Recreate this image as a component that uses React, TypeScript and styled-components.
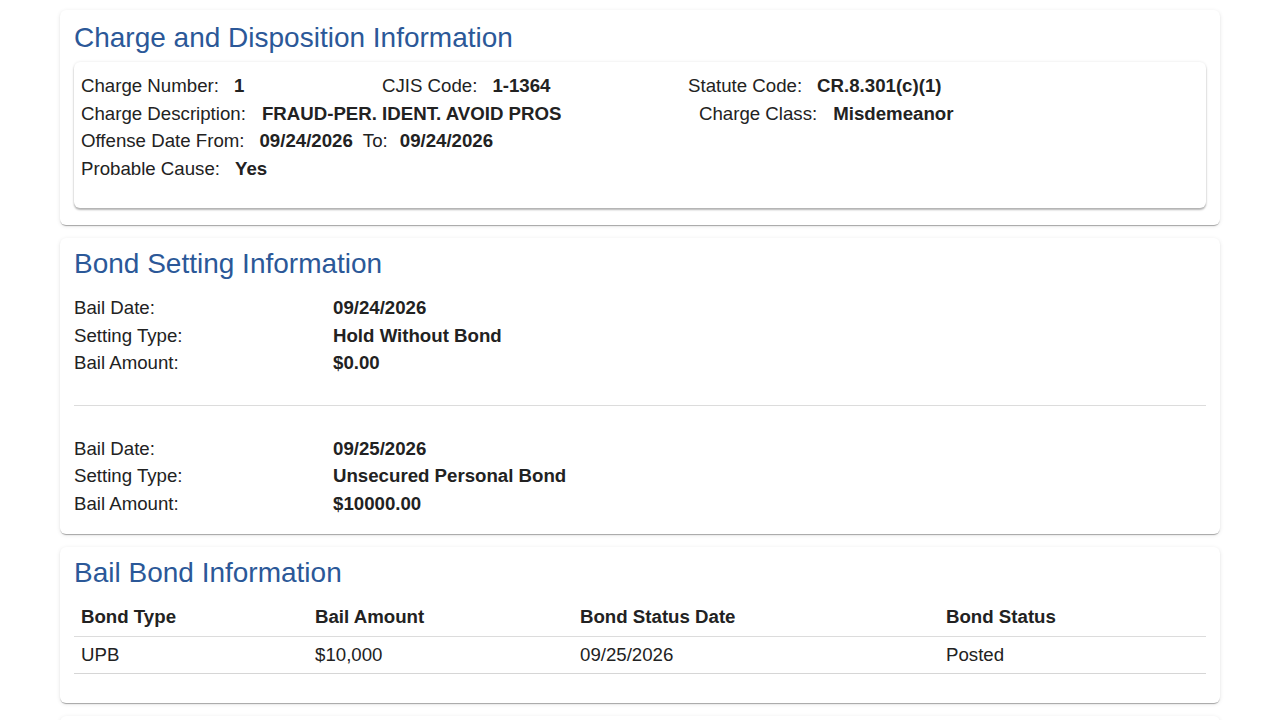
import React from "react";
import styled, { createGlobalStyle } from "styled-components";

const Global = createGlobalStyle`
  html, body { margin: 0; padding: 0; background: #ffffff; }
  body {
    font-family: "Liberation Sans", Arial, Helvetica, sans-serif;
    color: #222222;
    -webkit-font-smoothing: antialiased;
  }
  * { box-sizing: border-box; }
`;

const Page = styled.main`
  display: flex;
  flex-direction: column;
  gap: 13px;
  padding: 10px 60px 40px;
`;

const Card = styled.section<{ $top?: number }>`
  background: #fff;
  border-radius: 6px;
  padding: ${(p) => p.$top ?? 10}px 14px 17px;
  box-shadow: 0 2px 1px -1px rgba(0, 0, 0, 0.22), 0 1px 1px 0 rgba(0, 0, 0, 0.12),
    0 1px 4px 0 rgba(0, 0, 0, 0.1);
`;

const Title = styled.h2`
  margin: 0;
  font-size: 28px;
  line-height: 32px;
  font-weight: 400;
  color: #2b5898;
`;

const InnerCard = styled.div`
  margin-top: 8px;
  border-radius: 6px;
  padding: 10px 7px 26px;
  background: #fff;
  box-shadow: 0 2px 2px 0 rgba(0, 0, 0, 0.28), 0 0 3px 0 rgba(0, 0, 0, 0.1);
`;

const ChargeGrid = styled.div`
  display: grid;
  grid-template-columns: 301px 306px 1fr;
  font-size: 18.67px;
  line-height: 27.5px;
`;

const Field = styled.div<{ $span?: number; $shift?: number }>`
  display: flex;
  align-items: baseline;
  white-space: nowrap;
  grid-column: span ${(p) => p.$span ?? 1};
  padding-left: ${(p) => p.$shift ?? 0}px;
`;

const Label = styled.span`
  font-weight: 400;
`;

const Value = styled.b<{ $gap?: number }>`
  font-weight: 700;
  margin-left: ${(p) => p.$gap ?? 15}px;
  margin-right: 10px;
`;

const BondGroup = styled.div`
  display: grid;
  grid-template-columns: 259px 1fr;
  font-size: 18.67px;
  line-height: 27.5px;
  margin-top: 14px;
`;

const BondLabel = styled.span``;
const BondValue = styled.b`
  font-weight: 700;
`;

const Divider = styled.hr`
  border: none;
  border-top: 1px solid #dcdcdc;
  margin: 28px 0 29px;
`;

const Table = styled.table`
  margin-top: 10px;
  width: 100%;
  border-collapse: collapse;
  table-layout: fixed;
  font-size: 18.67px;
  margin-bottom: 12px;
`;

const Th = styled.th<{ $w?: number }>`
  text-align: left;
  font-weight: 700;
  padding: 0 7px;
  height: 37px;
  border-bottom: 1px solid #dcdcdc;
  width: ${(p) => (p.$w ? `${p.$w}px` : "auto")};
`;

const Td = styled.td`
  padding: 0 7px;
  height: 37px;
  border-bottom: 1px solid #d6d6d6;
  font-weight: 400;
`;

const NextCard = styled(Card)`
  min-height: 120px;
`;

const bonds = [
  { date: "09/24/2026", type: "Hold Without Bond", amount: "$0.00" },
  { date: "09/25/2026", type: "Unsecured Personal Bond", amount: "$10000.00" },
];

export default function App() {
  return (
    <>
      <Global />
      <Page>
        <Card $top={12}>
          <Title>Charge and Disposition Information</Title>
          <InnerCard>
            <ChargeGrid>
              <Field>
                <Label>Charge Number:</Label>
                <Value>1</Value>
              </Field>
              <Field>
                <Label>CJIS Code:</Label>
                <Value>1-1364</Value>
              </Field>
              <Field>
                <Label>Statute Code:</Label>
                <Value>CR.8.301(c)(1)</Value>
              </Field>
              <Field $span={2}>
                <Label>Charge Description:</Label>
                <Value $gap={16}>FRAUD-PER. IDENT. AVOID PROS</Value>
              </Field>
              <Field $shift={11}>
                <Label>Charge Class:</Label>
                <Value $gap={16}>Misdemeanor</Value>
              </Field>
              <Field $span={3}>
                <Label>Offense Date From:</Label>
                <Value>09/24/2026</Value>
                <Label>To:</Label>
                <Value $gap={12}>09/24/2026</Value>
              </Field>
              <Field $span={3}>
                <Label>Probable Cause:</Label>
                <Value>Yes</Value>
              </Field>
            </ChargeGrid>
          </InnerCard>
        </Card>

        <Card>
          <Title>Bond Setting Information</Title>
          {bonds.map((b, i) => (
            <React.Fragment key={b.date}>
              {i > 0 && <Divider />}
              <BondGroup>
                <BondLabel>Bail Date:</BondLabel>
                <BondValue>{b.date}</BondValue>
                <BondLabel>Setting Type:</BondLabel>
                <BondValue>{b.type}</BondValue>
                <BondLabel>Bail Amount:</BondLabel>
                <BondValue>{b.amount}</BondValue>
              </BondGroup>
            </React.Fragment>
          ))}
        </Card>

        <Card>
          <Title>Bail Bond Information</Title>
          <Table>
            <thead>
              <tr>
                <Th $w={234}>Bond Type</Th>
                <Th $w={265}>Bail Amount</Th>
                <Th $w={366}>Bond Status Date</Th>
                <Th>Bond Status</Th>
              </tr>
            </thead>
            <tbody>
              <tr>
                <Td>UPB</Td>
                <Td>$10,000</Td>
                <Td>09/25/2026</Td>
                <Td>Posted</Td>
              </tr>
            </tbody>
          </Table>
        </Card>

        <NextCard />
      </Page>
    </>
  );
}
